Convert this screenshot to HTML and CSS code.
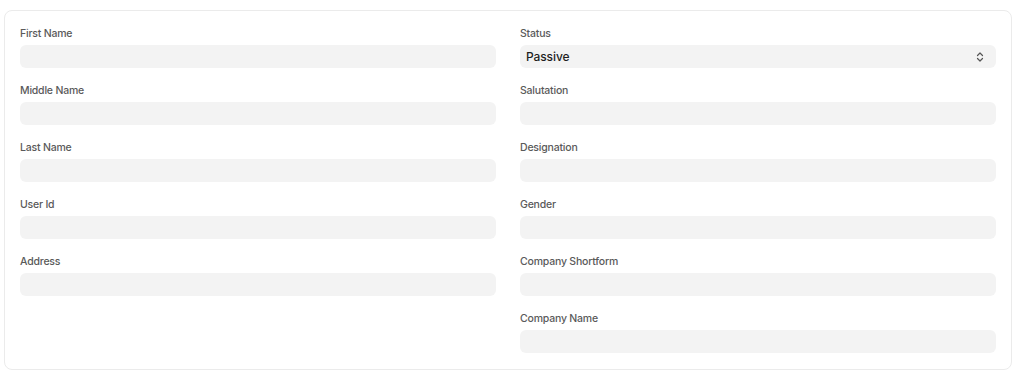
FILE: index.html
```html
<!DOCTYPE html>
<html>
  <head>
    <meta charset="utf-8" />
    <title>Contact details</title>
    <link rel="stylesheet" href="styles.css">
  </head>
  <body>
    <div class="page">
      <div class="card">
        <!-- left column -->
        <div class="column">
          <div class="field">
            <label class="field-label">First Name</label>
            <input class="field-input" type="text">
          </div>
          <div class="field">
            <label class="field-label">Middle Name</label>
            <input class="field-input" type="text">
          </div>
          <div class="field">
            <label class="field-label">Last Name</label>
            <input class="field-input" type="text">
          </div>
          <div class="field">
            <label class="field-label">User Id</label>
            <input class="field-input" type="text">
          </div>
          <div class="field">
            <label class="field-label">Address</label>
            <input class="field-input" type="text">
          </div>
        </div>

        <!-- right column -->
        <div class="column">
          <div class="field">
            <label class="field-label">Status</label>
            <div class="select">
              <span class="select-value">Passive</span>
              <svg class="select-icon" width="8" height="12" viewBox="0 0 8 12" fill="none" stroke="#555" stroke-width="1.2" stroke-linecap="round" stroke-linejoin="round">
                <path d="M1.5 4.5 L4 2 L6.5 4.5" />
                <path d="M1.5 7.5 L4 10 L6.5 7.5" />
              </svg>
            </div>
          </div>
          <div class="field">
            <label class="field-label">Salutation</label>
            <input class="field-input" type="text">
          </div>
          <div class="field">
            <label class="field-label">Designation</label>
            <input class="field-input" type="text">
          </div>
          <div class="field">
            <label class="field-label">Gender</label>
            <input class="field-input" type="text">
          </div>
          <div class="field">
            <label class="field-label">Company Shortform</label>
            <input class="field-input" type="text">
          </div>
          <div class="field">
            <label class="field-label">Company Name</label>
            <input class="field-input" type="text">
          </div>
        </div>
      </div>
    </div>
  </body>
</html>
```

FILE: styles.css
```css
body {
  margin: 0;
  font-family: Inter, "Noto Sans", sans-serif;
  background: #fff;
}

.page {
  padding: 10px 0 0 4px;
}

.card {
  width: 1008px;
  box-sizing: border-box;
  border: 1px solid #ebebeb;
  border-radius: 8px;
  padding: 16px 15px 16px 15px;
  display: grid;
  grid-template-columns: 1fr 1fr;
  column-gap: 24px;
}

.column {
  display: flex;
  flex-direction: column;
  gap: 16px;
}

.field {
  display: flex;
  flex-direction: column;
  gap: 4px;
}

.field-label {
  font-size: 10.5px;
  font-weight: 500;
  letter-spacing: -0.2px;
  line-height: 14px;
  color: #5a5a5a;
}

.field-input {
  height: 23px;
  box-sizing: border-box;
  border: none;
  border-radius: 6px;
  background: #f3f3f3;
  margin: 0;
  padding: 0 7px;
  outline: none;
}

.select {
  height: 23px;
  box-sizing: border-box;
  border-radius: 6px;
  background: #f3f3f3;
  display: flex;
  align-items: center;
  justify-content: space-between;
  padding: 0 12px 0 6px;
}

.select-value {
  font-size: 12px;
  letter-spacing: -0.1px;
  font-weight: 500;
  color: #1f1f1f;
}

.select-icon {
  display: block;
}
```
